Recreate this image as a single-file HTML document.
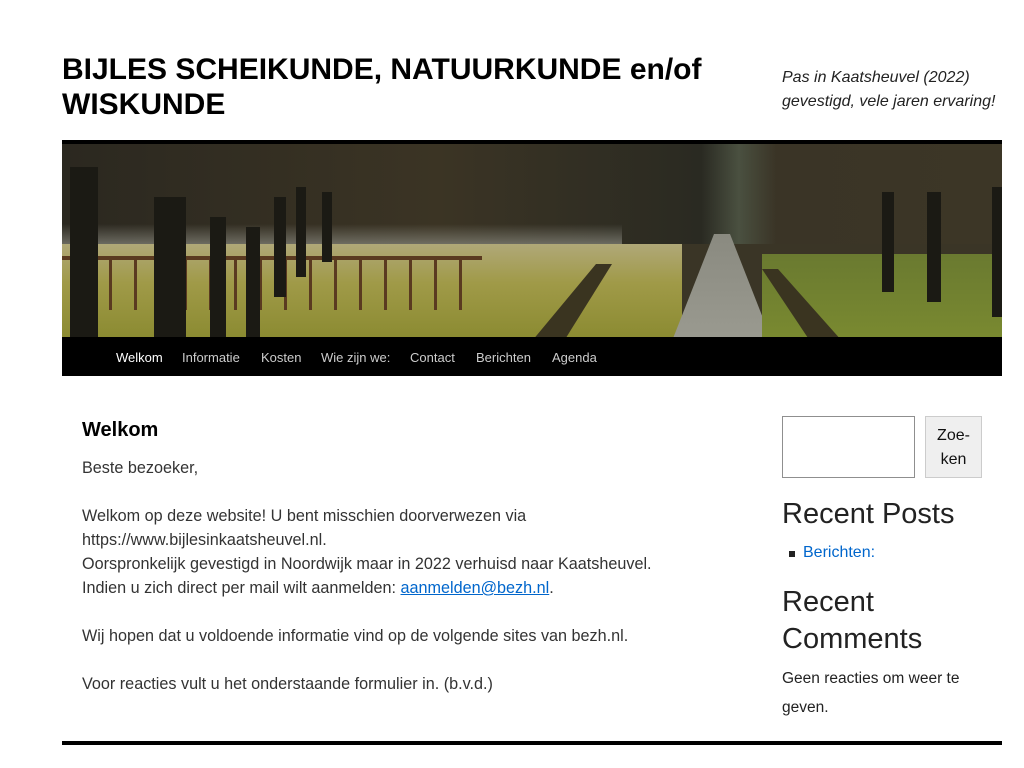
<!DOCTYPE html>
<html><head><meta charset="utf-8"><style>
body{margin:0;background:#fff;font-family:"Liberation Sans",sans-serif;width:1024px;height:768px;overflow:hidden;position:relative}
.a{position:absolute}
h1{position:absolute;left:62px;top:52px;margin:0;font-size:30px;line-height:35px;font-weight:bold;color:#000;width:720px}
.tag{left:782px;top:66px;font-style:italic;font-size:16px;line-height:24px;color:#222}
.img{left:62px;top:140px;width:940px;height:197px;border-top:4px solid #000;box-sizing:border-box;overflow:hidden;background:#3a3526}
.tr{position:absolute;background:#1b1a14;bottom:0}
.nav{left:62px;top:337px;width:940px;height:39px;background:#000;font-size:13px;color:#ccc}
.nav span{position:absolute;top:13px}
.c{font-size:16.2px;line-height:24px;color:#333;left:82px}
</style></head><body>
<h1>BIJLES SCHEIKUNDE, NATUURKUNDE en/of WISKUNDE</h1>
<div class="a tag">Pas in Kaatsheuvel (2022)<br>gevestigd, vele jaren ervaring!</div>
<div class="a img">
<div class="a" style="left:0;top:0;width:940px;height:100px;background:linear-gradient(90deg,#2b2820 0%,#3b3424 40%,#2a2a22 68%,#4a5040 72%,#3a3426 76%,#3c3626 100%)"></div>
<div class="a" style="left:0;top:80px;width:560px;height:30px;background:linear-gradient(180deg,rgba(120,120,110,0),#8a8a80)"></div>
<div class="a" style="left:0;top:100px;width:620px;height:97px;background:linear-gradient(180deg,#b0a878,#a09a48 40%,#8a8a30 100%)"></div>
<div class="a" style="left:610px;top:90px;width:100px;height:107px;background:linear-gradient(180deg,#8a8a80,#9a9a90);clip-path:polygon(42% 0,58% 0,100% 100%,0 100%)"></div>
<div class="a" style="left:700px;top:110px;width:240px;height:87px;background:linear-gradient(180deg,#6a7a30,#7a8a30)"></div>
<div class="a" style="left:0;top:112px;width:420px;height:50px;border-top:4px solid #5a3a20;background:repeating-linear-gradient(90deg,transparent 0 22px,#5a3a20 22px 25px)"></div>
<div class="a" style="left:470px;top:120px;width:80px;height:77px;background:#3a3420;clip-path:polygon(80% 0,100% 0,40% 100%,0 100%)"></div>
<div class="a" style="left:700px;top:125px;width:80px;height:72px;background:#3a3420;clip-path:polygon(0 0,20% 0,100% 100%,60% 100%)"></div>
<div class="tr" style="left:8px;width:28px;height:170px"></div>
<div class="tr" style="left:92px;width:32px;height:140px"></div>
<div class="tr" style="left:148px;width:16px;height:120px"></div>
<div class="tr" style="left:184px;width:14px;height:110px"></div>
<div class="tr" style="left:212px;width:12px;height:100px;bottom:40px"></div>
<div class="tr" style="left:234px;width:10px;height:90px;bottom:60px"></div>
<div class="tr" style="left:260px;width:10px;height:70px;bottom:75px"></div>
<div class="tr" style="left:820px;width:12px;height:100px;bottom:45px"></div>
<div class="tr" style="left:865px;width:14px;height:110px;bottom:35px"></div>
<div class="tr" style="left:930px;width:12px;height:130px;bottom:20px"></div>
</div>
<div class="a nav">
<span style="left:54px;color:#fff">Welkom</span><span style="left:120px">Informatie</span><span style="left:199px">Kosten</span><span style="left:259px">Wie zijn we:</span><span style="left:348px">Contact</span><span style="left:414px">Berichten</span><span style="left:490px">Agenda</span>
</div>
<div class="a" style="left:82px;top:419px;font-size:20px;font-weight:bold;color:#000">Welkom</div>
<div class="a c" style="top:456px">Beste bezoeker,<br><br>Welkom op deze website! U bent misschien doorverwezen via<br>https://www.bijlesinkaatsheuvel.nl.<br>Oorspronkelijk gevestigd in Noordwijk maar in 2022 verhuisd naar Kaatsheuvel.<br>Indien u zich direct per mail wilt aanmelden: <span style="color:#0066cc;text-decoration:underline">aanmelden@bezh.nl</span>.<br><br>Wij hopen dat u voldoende informatie vind op de volgende sites van bezh.nl.<br><br>Voor reacties vult u het onderstaande formulier in. (b.v.d.)</div>
<div class="a" style="left:782px;top:416px;width:133px;height:62px;border:1px solid #8f8f8f;box-sizing:border-box"></div>
<div class="a" style="left:925px;top:416px;width:57px;height:62px;border:1px solid #ccc;background:#efefef;box-sizing:border-box;text-align:center;font-size:16px;line-height:24px;padding-top:7px;color:#111">Zoe-<br>ken</div>
<div class="a" style="left:782px;top:498px;font-size:29px;color:#222">Recent Posts</div>
<div class="a" style="left:789px;top:551px;width:6px;height:6px;background:#222"></div>
<div class="a" style="left:803px;top:544px;font-size:16px;color:#0066cc">Berichten:</div>
<div class="a" style="left:782px;top:584px;font-size:29px;line-height:37px;color:#222">Recent<br>Comments</div>
<div class="a" style="left:782px;top:664px;font-size:15.5px;line-height:29px;color:#222">Geen reacties om weer te<br>geven.</div>
<div class="a" style="left:62px;top:741px;width:940px;height:4px;background:#000"></div>
</body></html>
